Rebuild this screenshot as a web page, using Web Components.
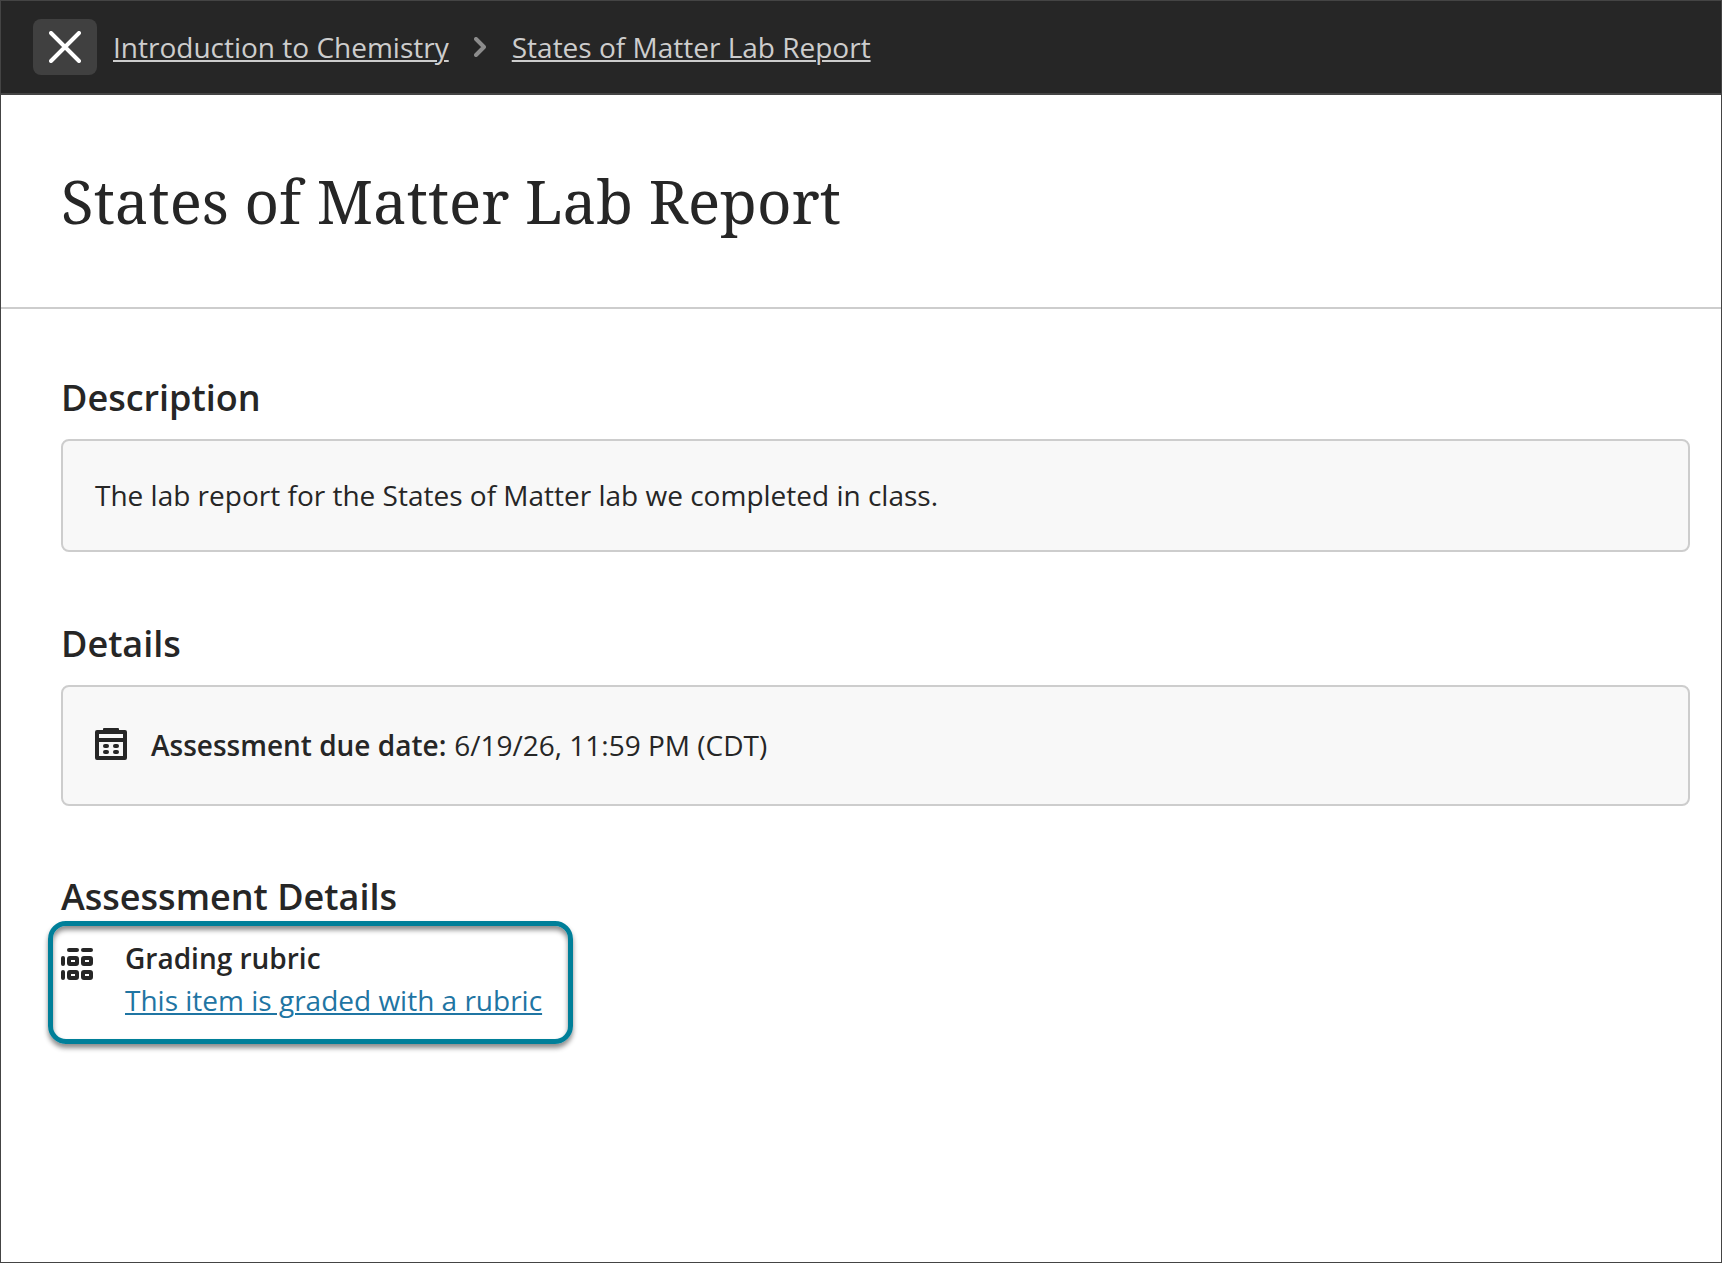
<!DOCTYPE html>
<html lang="en">
<head>
<meta charset="utf-8">
<title>States of Matter Lab Report</title>
<style>
  body {
    margin: 0;
    background: #fff;
    color: #262626;
    font: 28px/42px "Open Sans", "Noto Sans", sans-serif;
  }
  b {
    margin-right: .6px;
    font-weight: 600;
  }
</style>
</head>
<body>
<assessment-page>
  <crumb-bar slot="header">
    <crumb-link>Introduction to Chemistry</crumb-link>
    <crumb-link>States of Matter Lab Report</crumb-link>
  </crumb-bar>
  <page-title slot="title">States of Matter Lab Report</page-title>
  <detail-section heading="Description">
    <detail-card>The lab report for the States of Matter lab we completed in class.</detail-card>
  </detail-section>
  <detail-section heading="Details">
    <detail-card style="--card-height: 121px">
      <ui-icon name="calendar" slot="icon"></ui-icon>
      <b>Assessment due date:</b> 6/19/26, 11:59 PM (CDT)
    </detail-card>
  </detail-section>
  <detail-section heading="Assessment Details" style="--heading-gap: 0; margin-top: -1px">
    <rubric-callout>
      <span slot="label">Grading rubric</span>
      <span slot="link">This item is graded with a rubric</span>
    </rubric-callout>
  </detail-section>
</assessment-page>

<script>
const icons = {
  close: `<svg width="32" height="32" viewBox="0 0 32 32" fill="none" stroke="#fff" stroke-width="4" stroke-linecap="round">
    <path d="M2 2l28 28M30 2L2 30"/>
  </svg>`,
  chevron: `<svg width="12" height="20" viewBox="0 0 12 20" fill="none" stroke="#8c8c8c" stroke-width="4" stroke-linecap="round" stroke-linejoin="round">
    <path d="M2 2l8 8-8 8"/>
  </svg>`,
  calendar: `<svg width="32" height="32" viewBox="0 0 32 32" fill="#262626">
    <path fill-rule="evenodd" d="M8 2V1q0-1 1-1h14q1 0 1 1v1h6q2 0 2 2v26q0 2-2 2H2q-2 0-2-2V4q0-2 2-2zM4 6v4h24V6zM4 14v14h24V14z"/>
    <rect x="8" y="16" width="6" height="4" rx="2"/><rect x="18" y="16" width="6" height="4" rx="2"/>
    <rect x="8" y="22" width="6" height="4" rx="2"/><rect x="18" y="22" width="6" height="4" rx="2"/>
  </svg>`,
  rubric: `<svg width="32" height="32" viewBox="0 0 32 32" fill="#262626">
    <rect x="6" width="12" height="4" rx="2"/><rect x="20" width="12" height="4" rx="2"/>
    <rect y="8" width="4" height="10" rx="2"/><rect y="22" width="4" height="10" rx="2"/>
    <g fill="none" stroke="#262626" stroke-width="4">
      <rect x="8" y="10" width="8" height="6" rx="1"/><rect x="22" y="10" width="8" height="6" rx="1"/>
      <rect x="8" y="24" width="8" height="6" rx="1"/><rect x="22" y="24" width="8" height="6" rx="1"/>
    </g>
  </svg>`
}

class BaseElement extends HTMLElement {
  constructor() {
    super()
    this.attachShadow({ mode: "open" })
  }

  connectedCallback() {
    this.shadowRoot.innerHTML = this.render()
  }
}

class UiIcon extends BaseElement {
  render() {
    return `
      <style>
        :host { display: block; flex: none; }
        svg { display: block; }
      </style>
      ${icons[this.getAttribute("name")]}
    `
  }
}

class AssessmentPage extends BaseElement {
  render() {
    return `
      <style>
        :host {
          display: flex;
          flex-direction: column;
          box-sizing: border-box;
          height: 100vh;
          border: 1px solid #444;
        }
        main {
          display: flex;
          flex-direction: column;
          gap: 68px;
          padding: 65px 31px 0 60px;
        }
      </style>
      <slot name="header"></slot>
      <slot name="title"></slot>
      <main><slot></slot></main>
    `
  }
}

class CrumbBar extends BaseElement {
  render() {
    return `
      <style>
        :host {
          display: flex;
          align-items: center;
          height: 92px;
          padding-left: 32px;
          background: #262626;
          border-bottom: 2px solid #444;
        }
        button {
          display: grid;
          place-items: center;
          width: 64px;
          height: 56px;
          margin: 0 16px 0 0;
          padding: 0;
          border: 0;
          border-radius: 8px;
          background: #404040;
        }
        nav { display: flex; }
      </style>
      <button aria-label="Close"><ui-icon name="close"></ui-icon></button>
      <nav><slot></slot></nav>
    `
  }
}

class CrumbLink extends BaseElement {
  render() {
    return `
      <style>
        :host { display: flex; align-items: center; color: #cdcdcd; }
        :host(:first-child) ui-icon { display: none; }
        ui-icon { margin: 0 26px 0 25px; }
        a { text-decoration: underline 2px; text-underline-offset: 2px; }
      </style>
      <ui-icon name="chevron"></ui-icon>
      <a><slot></slot></a>
    `
  }
}

class PageTitle extends BaseElement {
  render() {
    return `
      <style>
        :host {
          display: flex;
          align-items: center;
          height: 212px;
          padding-left: 60px;
          border-bottom: 2px solid #cdcdcd;
        }
        h1 {
          margin: 0;
          font: 400 60px/82px "Noto Serif", "Droid Serif", "DejaVu Serif Condensed", "DejaVu Serif", serif;
          white-space: nowrap;
        }
      </style>
      <h1><slot></slot></h1>
    `
  }
}

class DetailSection extends BaseElement {
  render() {
    return `
      <style>
        :host { display: block; }
        h2 {
          margin: 0 0 var(--heading-gap, 17px);
          font-size: 36px;
          font-weight: 600;
          line-height: 48px;
        }
      </style>
      <h2>${this.getAttribute("heading")}</h2>
      <slot></slot>
    `
  }
}

class DetailCard extends BaseElement {
  render() {
    return `
      <style>
        :host {
          display: flex;
          align-items: center;
          gap: 24px;
          box-sizing: border-box;
          height: var(--card-height, 113px);
          padding: 0 32px 1px;
          border: 2px solid #cdcdcd;
          border-radius: 8px;
          background: #f8f8f8;
        }
        ::slotted(ui-icon) { margin-bottom: 2px; }
      </style>
      <slot name="icon"></slot>
      <div><slot></slot></div>
    `
  }
}

class RubricCallout extends BaseElement {
  render() {
    return `
      <style>
        :host {
          display: flex;
          gap: 32px;
          box-sizing: border-box;
          width: 525px;
          height: 123px;
          margin-left: -13px;
          padding: 11px 0 0 8px;
          border: 5px solid #007f99;
          border-radius: 18px;
          box-shadow: 0 4px 5px rgba(0, 0, 0, .45), inset 0 4px 5px rgba(0, 0, 0, .45);
        }
        ui-icon { margin-top: 11px; }
        .label { font-weight: 600; }
        .link {
          color: #1f75a3;
          text-decoration: underline 2px;
          text-underline-offset: 2px;
        }
      </style>
      <ui-icon name="rubric"></ui-icon>
      <div>
        <div class="label"><slot name="label"></slot></div>
        <a class="link"><slot name="link"></slot></a>
      </div>
    `
  }
}

customElements.define("ui-icon", UiIcon)
customElements.define("assessment-page", AssessmentPage)
customElements.define("crumb-bar", CrumbBar)
customElements.define("crumb-link", CrumbLink)
customElements.define("page-title", PageTitle)
customElements.define("detail-section", DetailSection)
customElements.define("detail-card", DetailCard)
customElements.define("rubric-callout", RubricCallout)
</script>
</body>
</html>
